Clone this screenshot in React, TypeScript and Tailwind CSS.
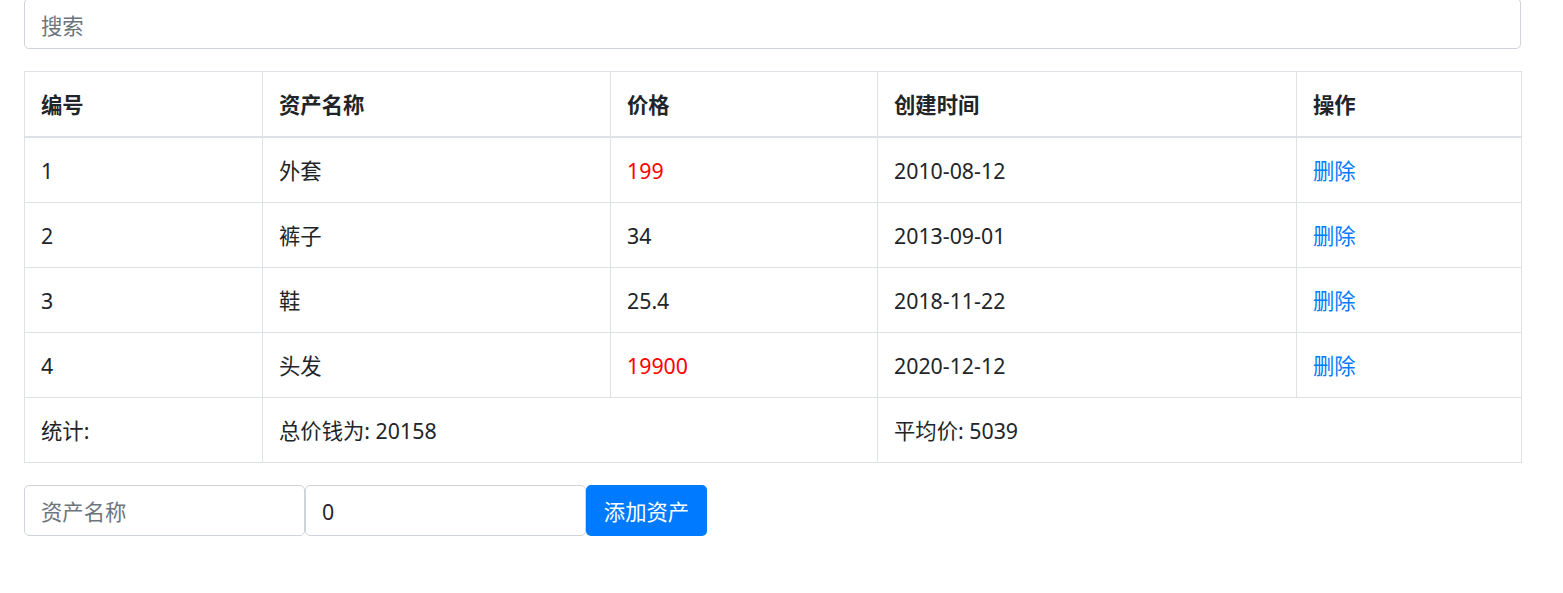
import React from 'react'

const rows = [
    { id: 1, name: '外套', price: 199, date: '2010-08-12' },
    { id: 2, name: '裤子', price: 34, date: '2013-09-01' },
    { id: 3, name: '鞋', price: 25.4, date: '2018-11-22' },
    { id: 4, name: '头发', price: 19900, date: '2020-12-12' },
]

const cell = 'border border-[#dee2e6] px-4 pt-[17px] pb-[15px] leading-[32px] text-left align-top'

export default function App() {
    const total = rows.reduce((s, r) => s + r.price, 0)
    const avg = Math.floor(total / rows.length)
    return (
        <div
            className="w-[1563px] h-[593px] overflow-hidden bg-white px-[24px] text-[21.33px] text-[#212529]"
            style={{ fontFamily: '"Noto Sans", "Noto Sans CJK SC", sans-serif' }}
        >
            <input
                className="-mt-[2px] block w-[1497px] h-[51px] rounded-[5px] border border-[#ced4da] px-4 pt-[3px] outline-none placeholder:text-[#6c757d]"
                placeholder="搜索"
            />
            <table className="mt-[22px] w-[1497px] border-collapse table-fixed">
                <colgroup>
                    <col className="w-[238px]" />
                    <col className="w-[348px]" />
                    <col className="w-[267px]" />
                    <col className="w-[419px]" />
                    <col className="w-[225px]" />
                </colgroup>
                <thead>
                    <tr className="font-bold">
                        <th className={`${cell} border-b-2`}>编号</th>
                        <th className={`${cell} border-b-2`}>资产名称</th>
                        <th className={`${cell} border-b-2`}>价格</th>
                        <th className={`${cell} border-b-2`}>创建时间</th>
                        <th className={`${cell} border-b-2`}>操作</th>
                    </tr>
                </thead>
                <tbody>
                    {rows.map(r => (
                        <tr key={r.id}>
                            <td className={cell}>{r.id}</td>
                            <td className={cell}>{r.name}</td>
                            <td className={`${cell} ${r.price > 100 ? 'text-[#ff0000]' : ''}`}>{r.price}</td>
                            <td className={cell}>{r.date}</td>
                            <td className={cell}>
                                <a href="#" className="text-[#007bff]">删除</a>
                            </td>
                        </tr>
                    ))}
                    <tr>
                        <td className={cell}>统计:</td>
                        <td className={cell} colSpan={2}>总价钱为: {Math.floor(total)}</td>
                        <td className={cell} colSpan={2}>平均价: {avg}</td>
                    </tr>
                </tbody>
            </table>
            <div className="mt-[22px] flex">
                <input
                    className="w-[281px] h-[51px] rounded-[5px] border border-[#ced4da] px-4 pt-[2px] outline-none placeholder:text-[#6c757d]"
                    placeholder="资产名称"
                />
                <input
                    className="w-[281px] h-[51px] rounded-[5px] border border-[#ced4da] px-4 pt-[2px] outline-none"
                    defaultValue="0"
                />
                <button className="h-[51px] w-[121px] rounded-[5px] bg-[#007bff] pt-[2px] text-white">添加资产</button>
            </div>
        </div>
    )
}
